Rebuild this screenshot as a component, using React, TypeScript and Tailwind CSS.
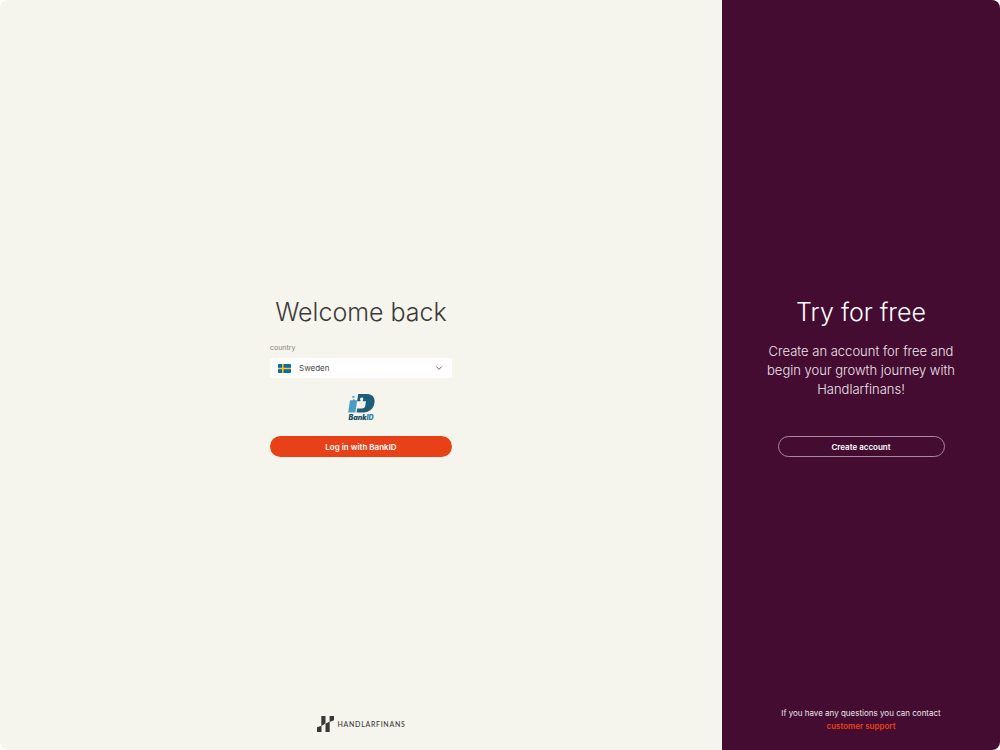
import React from 'react';
import { ChevronDown } from 'lucide-react';

const SwedishFlag: React.FC = () => (
  <svg className="w-[13px] h-[9px]" viewBox="0 0 13 9" aria-hidden="true">
    <rect width="13" height="9" rx="1" fill="#0b6aa9" />
    <path d="M0 4.5h13M4.8 0v9" stroke="#f7cc1b" strokeWidth="1.5" />
  </svg>
);

const BankIdLogo: React.FC = () => (
  <div className="flex flex-col items-center">
    <svg className="w-7 h-5" viewBox="0 0 28 20" aria-hidden="true">
      <circle cx="6.4" cy="4" r="1.3" fill="#6db5d3" />
      <path d="M3 7.2h2.6l.6-.9h1l.5.9h2.5L8.4 19.4H1.2z" fill="#4a9cc4" />
      <path
        d="M11.2 1h7.8c6.2 0 9.2 3.2 8.5 8.6-.8 6.2-4.8 9.8-11.2 9.8H9.6l.6-3.8h4.6c2.2 0 3.2-1 3.5-3l.7-4.4h-2.6c-.7 0-.9-.6-.4-1.2.8-1 .1-2.4-1.2-2.4s-2.2 1.4-1.4 2.4c.4.6.1 1.2-.6 1.2h-2.7z"
        fill="#1f5e78"
      />
    </svg>
    <span className="mt-px text-[7px] leading-[7px] font-black italic text-[#1c4e63]">
      Bank<span className="text-[#2f82a3]">ID</span>
    </span>
  </div>
);

const BrandLogo: React.FC = () => (
  <div className="flex items-center gap-1 text-[#3a3938]">
    <svg className="w-[17px] h-4" viewBox="0 0 17 16" fill="currentColor" aria-hidden="true">
      <path d="M4.3 0h4.2v7.4L4.3 10z" />
      <path d="M0 11.2l4.5-1.5V16H0z" />
      <path d="M8.5 7.8l4.2-2.4V16H8.5z" />
      <path d="M12.6 0H17v4.2l-4.4 1.8z" />
    </svg>
    <span className="font-[Lato,sans-serif] text-[7px] leading-none font-medium tracking-widest">
      HANDLARFINANS
    </span>
  </div>
);

const LoginPanel: React.FC = () => (
  <main className="w-[72.2%] flex flex-col items-center bg-[#f6f5ed]">
    <div className="flex-1 pt-[18px]" />

    <form className="w-[182px] pt-[3px] flex flex-col" onSubmit={(e) => e.preventDefault()}>
      <h1 className="self-center whitespace-nowrap text-[25px] leading-8 font-light text-[#3b3a38]">
        Welcome back
      </h1>

      <label htmlFor="country" className="mt-4 text-[7px] leading-2 text-[#858480]">
        country
      </label>
      <div className="relative mt-1.5">
        <select
          id="country"
          defaultValue="se"
          className="block w-full h-5 pl-[29px] pr-5 appearance-none rounded-xs bg-white text-[8px] text-[#4a4947]"
        >
          <option value="se">Sweden</option>
        </select>
        <span className="absolute inset-y-0 left-2 flex items-center pointer-events-none">
          <SwedishFlag />
        </span>
        <span className="absolute inset-y-0 right-2 flex items-center pointer-events-none text-[#4a4947]">
          <ChevronDown className="w-2.5 h-2.5" />
        </span>
      </div>

      <div className="h-[58px] flex items-center justify-center">
        <BankIdLogo />
      </div>

      <button type="submit" className="h-[21px] rounded-full bg-[#e84118] text-[8px] font-semibold text-white">
        Log in with BankID
      </button>
    </form>

    <footer className="flex-1 flex items-end pb-[18px]">
      <BrandLogo />
    </footer>
  </main>
);

const SignUpPanel: React.FC = () => (
  <aside className="flex-1 flex flex-col items-center bg-[#440c31] text-center text-white">
    <div className="flex-1 pt-[17px]" />

    <section className="w-[190px] pt-[3px] flex flex-col items-center">
      <h2 className="text-[25px] leading-8 font-light">Try for free</h2>
      <p className="mt-3.5 text-[13px] leading-[19px] font-light text-[#eee6eb]">
        Create an account for free and begin your growth journey with Handlarfinans!
      </p>
      <button
        type="button"
        className="mt-[37px] w-[167px] h-[21px] rounded-full border border-[#a88a9e] text-[8px] font-semibold"
      >
        Create account
      </button>
    </section>

    <footer className="flex-1 flex flex-col justify-end pb-[17px] text-[8px] leading-[13px]">
      <p className="text-[#eee6eb]">If you have any questions you can contact</p>
      <a href="#support" className="font-semibold text-[#e84118]">
        customer support
      </a>
    </footer>
  </aside>
);

export default function App() {
  return (
    <div className="bg-white">
      <div className="min-h-screen flex overflow-hidden rounded-lg font-[Inter,sans-serif]">
        <LoginPanel />
        <SignUpPanel />
      </div>
    </div>
  );
}
